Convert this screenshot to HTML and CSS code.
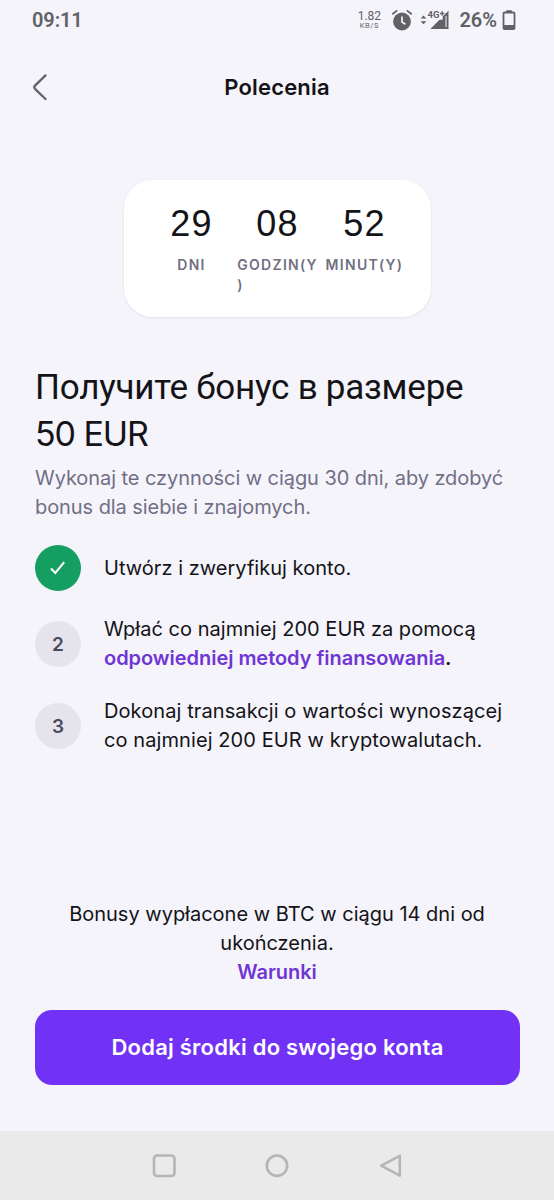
FILE: index.html
```html
<!DOCTYPE html>
<html lang="pl">
<head>
<meta charset="utf-8">
<title>Polecenia</title>
<link rel="stylesheet" href="styles.css">
</head>
<body>
<div class="screen">
  <div class="status">
    <span class="clock">09:11</span>
    <div class="speed"><span class="rate">1.82</span><span class="unit">KB/S</span></div>
    <svg class="alarm" width="22" height="22" viewBox="0 0 22 22"><circle cx="11" cy="12.5" r="8.9" fill="#626166"/><path d="M1.3 5.2 6.2 1.4M20.7 5.2 15.8 1.4" stroke="#626166" stroke-width="1.8" fill="none"/><path d="M11 7.5v5.5l3.4 2.2" stroke="#f5f4fa" stroke-width="1.7" fill="none"/></svg>
    <svg class="signal" width="30" height="22" viewBox="0 0 30 22"><path d="M0.5 9.6 3.5 6.6 6.5 9.6zM0.5 12.2h6l-3 3z" fill="#626166"/><path d="M28.5 1.8V20H10.3L19.5 10.8h3.2V7.6z" fill="#626166"/><path d="M26 7v11" stroke="#f5f4fa" stroke-width="1"/><text x="7.5" y="9" class="net">4G</text><path d="M20 4.5h4.4M22.2 2.3v4.4" stroke="#626166" stroke-width="1.3"/></svg>
    <span class="percent">26%</span>
    <svg class="battery" width="14" height="20" viewBox="0 0 14 20"><path d="M4.5 2V.8h5V2" fill="#626166" stroke="#626166"/><rect x="1.5" y="2.5" width="11" height="16.5" rx="1" fill="none" stroke="#626166" stroke-width="1.8"/><path d="M1.5 15h11v4h-11z" fill="#626166"/></svg>
  </div>
  <header class="topbar">
    <svg class="back" width="16" height="28" viewBox="0 0 16 28"><path d="M13.5 2.4 3 12.6q-1.4 1.6 0 3.2L13.5 26" fill="none" stroke="#67656b" stroke-width="2.4" stroke-linecap="round"/></svg>
    <h1 class="title">Polecenia</h1>
  </header>
  <section class="timer">
    <div class="cell"><span class="num">29</span><span class="label">DNI</span></div>
    <div class="cell hours"><span class="num">08</span><span class="label">GODZIN(Y<br>)</span></div>
    <div class="cell minutes"><span class="num">52</span><span class="label">MINUT(Y)</span></div>
  </section>
  <main class="content">
    <h2 class="headline"><span class="ru">Получите бонус в размере</span><span class="amount">50 EUR</span></h2>
    <p class="intro">Wykonaj te czynności w ciągu 30 dni, aby zdobyć<br>bonus dla siebie i znajomych.</p>
    <ol class="steps">
      <li class="step"><span class="badge done"><svg width="18" height="18" viewBox="0 0 18 18"><path d="M2 9.6 6.3 14 15.2 3.2" fill="none" stroke="#fff" stroke-width="2.1"/></svg></span><p class="text">Utwórz i zweryfikuj konto.</p></li>
      <li class="step"><span class="badge">2</span><p class="text">Wpłać co najmniej 200 EUR za pomocą<br><a class="link">odpowiedniej metody finansowania</a><b class="dot">.</b></p></li>
      <li class="step third"><span class="badge">3</span><p class="text">Dokonaj transakcji o wartości wynoszącej<br>co najmniej 200 EUR w kryptowalutach.</p></li>
    </ol>
  </main>
  <footer class="bottom">
    <p class="note">Bonusy wypłacone w BTC w ciągu 14 dni od<br>ukończenia.<br><a class="link terms">Warunki</a></p>
    <button class="cta">Dodaj środki do swojego konta</button>
  </footer>
  <nav class="nav">
    <svg width="26" height="26" viewBox="0 0 26 26"><rect x="3" y="2.5" width="20.5" height="20.5" rx="3"/></svg>
    <svg width="26" height="26" viewBox="0 0 26 26"><circle cx="13" cy="12.7" r="10.2"/></svg>
    <svg width="26" height="26" viewBox="0 0 26 26"><path d="M22.8 2.8v19.8L4.2 12.7z"/></svg>
  </nav>
</div>
</body>
</html>
```
FILE: styles.css
```css
* { box-sizing: border-box; }
body { margin: 0; background: #f5f4fa; }
h1, h2, p, ol { margin: 0; padding: 0; font-weight: 400; }
.screen {
  width: 554px; height: 1200px; display: flex; flex-direction: column;
  background: #f5f4fa; color: #131318; font-family: Inter, "Noto Sans", sans-serif;
  overflow: hidden; white-space: nowrap;
}
.status {
  height: 40px; display: flex; align-items: center; padding: 0 38px 0 32px;
  font-family: Roboto, sans-serif; color: #626166;
}
.clock { font-size: 20px; font-weight: 600; flex: 1; letter-spacing: -0.1px; }
.speed { display: flex; flex-direction: column; align-items: center; width: 24px; }
.rate { font-size: 12px; line-height: 11px; }
.unit { font-size: 7.5px; line-height: 8px; letter-spacing: 0.6px; }
.alarm { margin-left: 10px; }
.signal { margin-left: 7px; }
.net { font: 700 9.5px Roboto, sans-serif; fill: #626166; }
.percent { font-size: 20px; font-weight: 600; margin-left: 9px; }
.battery { margin-left: 5px; }
.topbar {
  height: 94px; display: grid; grid-template-columns: 54px 1fr 54px;
  align-items: center;
}
.back { margin-left: 32px; }
.title { text-align: center; font-size: 22px; font-weight: 600; letter-spacing: 0.2px; }
.timer {
  width: 307px; height: 137px; margin: 46px 0 0 123.5px; padding: 23px 24px 0 25px;
  display: grid; grid-template-columns: 86px 86px 86px;
  background: #fff; border-radius: 29px; box-shadow: 0 1px 3px rgba(30, 25, 60, .08);
}
.cell { display: flex; flex-direction: column; align-items: center; }
.minutes { padding-left: 2px; }
.num { font: 36px/42px "Liberation Sans", Arial, sans-serif; letter-spacing: 1.2px; }
.label { font-size: 14px; line-height: 20px; margin-top: 10px; font-weight: 600; letter-spacing: 1.3px; color: #716f82; }
.content { padding: 48px 35px 0; }
.headline { font-size: 35px; line-height: 46px; display: flex; flex-direction: column; }
.ru { font-family: Roboto, sans-serif; letter-spacing: -0.24px; }
.amount { font-size: 34px; line-height: 45px; letter-spacing: -1.1px; }
.intro { font-size: 20px; line-height: 29px; letter-spacing: -0.07px; color: #716f86; margin-top: 8px; }
.steps { list-style: none; display: flex; flex-direction: column; gap: 24px; margin-top: 23px; }
.step { display: flex; align-items: center; gap: 23px; min-height: 46px; }
.badge {
  width: 46px; height: 46px; border-radius: 50%; background: #e5e4ed; color: #4b4a5b;
  display: flex; align-items: center; justify-content: center; font-size: 19px; font-weight: 600;
}
.done { background: #149e61; }
.text { font-size: 20px; line-height: 29px; letter-spacing: 0.03px; }
.third .text { letter-spacing: 0.09px; }
.link { color: #7036d4; font-weight: 600; letter-spacing: -0.04px; }
.dot { font-weight: 600; }
.bottom { margin-top: auto; padding: 0 35px 46px; text-align: center; }
.note { font-size: 20px; line-height: 29px; }
.cta {
  display: block; width: 485px; height: 75px; margin-top: 23px; padding: 0 0 1px; border: 0; border-radius: 17px;
  background: #7132f5; color: #fff; font: 600 22px Inter, sans-serif; letter-spacing: 0.23px;
}
.nav {
  height: 69px; flex-shrink: 0; background: #eaeaea; display: flex; justify-content: center;
  align-items: center; gap: 87px;
}
.nav svg { fill: none; stroke: #b5b5b5; stroke-width: 2.6; stroke-linejoin: round; }
```
